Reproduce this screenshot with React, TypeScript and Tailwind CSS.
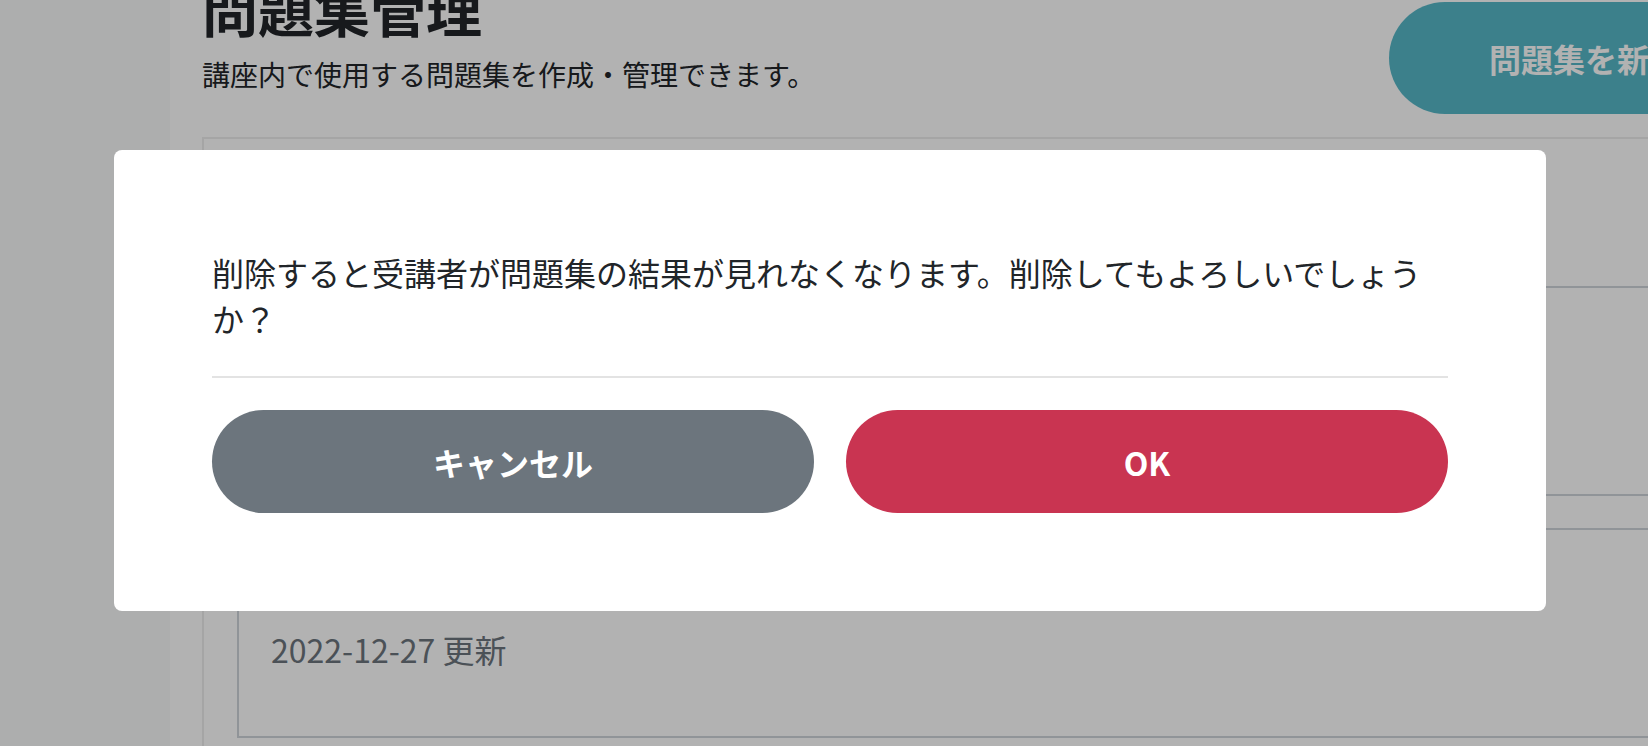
export default function App() {
  return (
    <div className="relative h-[746px] w-[1648px] overflow-hidden bg-white font-['Noto_Sans_CJK_JP',sans-serif] text-[#212529]">
      <div className="flex h-full">
        <aside className="h-full w-[170px] shrink-0 bg-[#f8f9fa]" />

        <main className="min-w-0 flex-1 overflow-hidden">
          <div className="-mt-[24px] w-[1700px] pl-[32px]">
            <div className="flex items-start">
              <div className="w-[1187px] shrink-0">
                <h1 className="text-[56px] font-bold leading-[64px]">問題集管理</h1>
                <p className="mt-[13px] text-[28px] leading-[42px]">
                  講座内で使用する問題集を作成・管理できます。
                </p>
              </div>
              <button className="mt-[26px] h-[112px] shrink-0 rounded-full bg-[#57b8c8] px-[100px] text-[32px] font-bold text-white">
                問題集を新規作成
              </button>
            </div>

            <div className="mt-[23px] border-2 border-[#ececec] px-[33px] pb-[33px] pt-[147px]">
              <div className="flex flex-col gap-[32px]">
                <div className="h-[210px] border-2 border-[#ced4da]" />
                <div className="h-[210px] border-2 border-[#ced4da] px-[32px] pt-[95px]">
                  <p className="text-[32px] leading-[48px] text-[#6c757d]">2022-12-27 更新</p>
                </div>
              </div>
            </div>
          </div>
        </main>
      </div>

      <div className="fixed inset-0 bg-black/30">
        <div className="ml-[114px] mt-[150px] w-[1432px] rounded-lg bg-white px-[98px] pb-[98px] pt-[99px]">
          <p className="text-[32px] leading-[46px] text-[#212529]">
            削除すると受講者が問題集の結果が見れなくなります。削除してもよろしいでしょうか？
          </p>
          <div className="mt-[35px] h-[2px] bg-[#e3e3e3]" />
          <div className="mt-[32px] grid grid-cols-2 gap-[32px]">
            <button className="h-[103px] rounded-full bg-[#6c757d] text-[32px] font-bold text-white">
              キャンセル
            </button>
            <button className="h-[103px] rounded-full bg-[#c93451] text-[32px] font-bold text-white">
              OK
            </button>
          </div>
        </div>
      </div>
    </div>
  );
}
